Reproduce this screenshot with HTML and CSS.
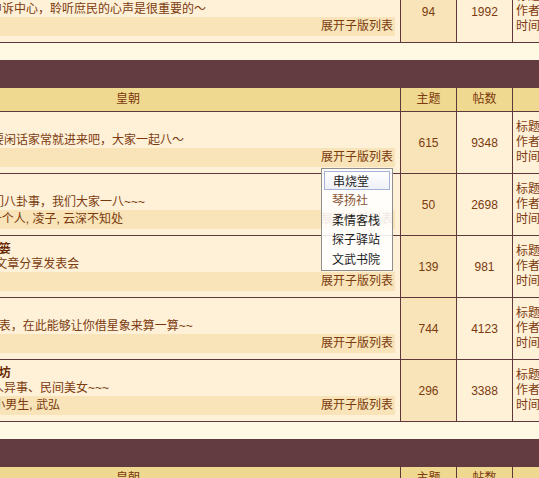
FILE: index.html
```html
<!DOCTYPE html>
<html lang="zh-CN">
<head>
<meta charset="utf-8">
<title>皇朝论坛</title>
<link rel="stylesheet" href="styles.css">
</head>
<body>
<div class="board">

  <div class="row">
    <div class="cell main">
      <div class="f-title">申诉中心</div>
      <div class="f-desc">冤屈 不平之事, 皆可来此申诉中心，聆听庶民的心声是很重要的～</div>
      <div class="f-strip"><span class="mods">版主：皇帝</span><span class="expand">展开子版列表</span></div>
    </div>
    <div class="cell num topics">94</div>
    <div class="cell num posts">1992</div>
    <div class="cell last"><div>标题：新人报到请看这里</div><div>作者：管理员</div><div>时间：2005-08-12</div></div>
  </div>

  <div class="spacer"></div>
  <div class="cat-bar"><span class="cat-name">皇朝天下</span></div>
  <div class="row head">
    <div class="cell">皇朝</div>
    <div class="cell">主题</div>
    <div class="cell">帖数</div>
    <div class="cell">最后发表</div>
  </div>

  <div class="row">
    <div class="cell main">
      <div class="f-title">闲话家常</div>
      <div class="f-desc">皇朝子民们平日里若是想要闲话家常就进来吧，大家一起八～</div>
      <div class="f-strip"><span class="mods">版主：小九</span><span class="expand">展开子版列表
        <ul class="submenu">
          <li class="active">串烧堂</li>
          <li class="visited">琴扬社</li>
          <li>柔情客栈</li>
          <li>探子驿站</li>
          <li>文武书院</li>
        </ul></span></div>
    </div>
    <div class="cell num topics">615</div>
    <div class="cell num posts">9348</div>
    <div class="cell last"><div>标题：今天天气真好</div><div>作者：小九</div><div>时间：2005-08-12</div></div>
  </div>

  <div class="row">
    <div class="cell main">
      <div class="f-title">八卦江湖</div>
      <div class="f-desc">闲来无事大家一起来说我们八卦事，我们大家一八~~~</div>
      <div class="f-strip"><span class="mods">版主：阿紫, Mary, 青青, 一个人, 凌子, 云深不知处</span><span class="expand">展开子版列表</span></div>
    </div>
    <div class="cell num topics">50</div>
    <div class="cell num posts">2698</div>
    <div class="cell last"><div>标题：最新八卦速递</div><div>作者：凌子</div><div>时间：2005-08-11</div></div>
  </div>

  <div class="row">
    <div class="cell main">
      <div class="f-title">诗词歌赋, 文人墨客的小书篓</div>
      <div class="f-desc">原创诗词 散文小说等各类文章分享发表会</div>
      <div class="f-strip"><span class="mods">版主：墨客</span><span class="expand">展开子版列表</span></div>
    </div>
    <div class="cell num topics">139</div>
    <div class="cell num posts">981</div>
    <div class="cell last"><div>标题：七律·秋思</div><div>作者：墨客</div><div>时间：2005-08-10</div></div>
  </div>

  <div class="row">
    <div class="cell main">
      <div class="f-title">星象占卜</div>
      <div class="f-desc">塔罗占卜, 紫微斗数命盘发表，在此能够让你借星象来算一算~~</div>
      <div class="f-strip"><span class="mods">版主：占星师</span><span class="expand">展开子版列表</span></div>
    </div>
    <div class="cell num topics">744</div>
    <div class="cell num posts">4123</div>
    <div class="cell last"><div>标题：本周星座运势</div><div>作者：占星师</div><div>时间：2005-08-12</div></div>
  </div>

  <div class="row">
    <div class="cell main">
      <div class="f-title">江湖传闻, 市井奇谈八卦小坊</div>
      <div class="f-desc">江湖传闻、宫廷秘史、奇人异事、民间美女~~~</div>
      <div class="f-strip"><span class="mods">版主：楚留香, 阿飞剑客, 小男生, 武弘</span><span class="expand">展开子版列表</span></div>
    </div>
    <div class="cell num topics">296</div>
    <div class="cell num posts">3388</div>
    <div class="cell last"><div>标题：民间美女榜</div><div>作者：武弘</div><div>时间：2005-08-12</div></div>
  </div>

  <div class="spacer"></div>
  <div class="cat-bar"><span class="cat-name">江湖风云</span></div>
  <div class="row head">
    <div class="cell">皇朝</div>
    <div class="cell">主题</div>
    <div class="cell">帖数</div>
    <div class="cell">最后发表</div>
  </div>

</div>
</body>
</html>
```

FILE: styles.css
```css
:root {
  --line: #5e383a;
  --bg: #fff0d8;
  --strip: #f8e4b8;
  --head: #efd890;
  --bar: #633c42;
  --cream: #fff8e2;
  --text: #7b3b0e;
}

html, body {
  margin: 0;
  overflow: hidden;
  background: var(--cream);
}

body {
  font-family: "Liberation Sans", "Noto Sans CJK SC", sans-serif;
  font-size: 12px;
  color: var(--text);
}

.board {
  margin: -19px 0 0 -144px;
  width: 957px;
}

.row {
  display: grid;
  grid-template-columns: 544px 55px 55px 300px;
  column-gap: 1px;
  background: var(--line);
  border-bottom: 1px solid var(--line);
}

.cell {
  background: var(--bg);
  min-width: 0;
}

.main {
  padding: 5px 5px 6px 4px;
}

.f-title {
  height: 16px;
  line-height: 16px;
  font-weight: bold;
  color: #6a2c06;
  white-space: nowrap;
}

.f-desc {
  height: 15px;
  line-height: 15px;
  white-space: nowrap;
}

.f-strip {
  display: flex;
  justify-content: space-between;
  height: 19px;
  line-height: 19px;
  background: var(--strip);
  white-space: nowrap;
}

.expand {
  position: relative;
  padding-right: 2px;
}

.num {
  display: flex;
  align-items: center;
  justify-content: center;
}

.topics {
  background: var(--strip);
}

.last {
  display: flex;
  flex-direction: column;
  justify-content: center;
  padding-left: 3px;
  line-height: 15px;
  white-space: nowrap;
  overflow: hidden;
}

.spacer {
  height: 17px;
  background: var(--cream);
}

.cat-bar {
  height: 28px;
  line-height: 28px;
  background: var(--bar);
}

.cat-name {
  display: none;
}

.head .cell {
  background: var(--head);
  height: 23px;
  line-height: 23px;
  text-align: center;
}

.submenu {
  position: absolute;
  left: 0;
  top: calc(100% + 1px);
  z-index: 5;
  box-sizing: border-box;
  width: 72px;
  margin: 0;
  padding: 2px;
  list-style: none;
  border: 1px solid #8e8e8e;
  background: rgba(255, 255, 255, 0.88);
  font-family: "Noto Sans CJK SC", sans-serif;
  font-size: 12px;
  color: #1c1c1c;
  text-align: left;
}

.submenu li {
  box-sizing: border-box;
  height: 19.4px;
  line-height: 17.4px;
  padding-left: 7px;
  border: 1px solid transparent;
}

.submenu .active {
  padding-left: 8px;
  border-color: #a6b2da;
  background: linear-gradient(#ffffff, #eef0f7);
}

.submenu .visited {
  color: #8a5432;
}
```
